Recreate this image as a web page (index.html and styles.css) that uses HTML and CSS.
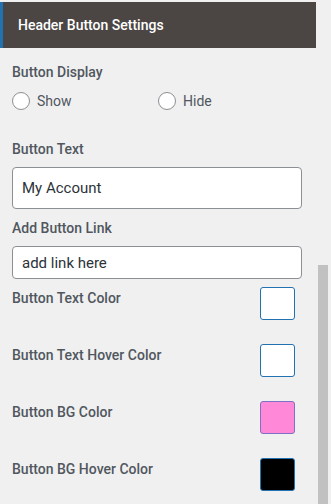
FILE: index.html
```html
<!DOCTYPE html>
<html lang="en">
<head>
  <meta charset="UTF-8" />
  <title>Header Button Settings</title>
  <link rel="stylesheet" href="styles.css">
</head>
<body>
  <div class="panel">
    <div class="panel-main">
      <h3 class="panel-title">Header Button Settings</h3>

      <div class="field field-display">
        <span class="field-label">Button Display</span>
        <div class="radio-row">
          <label class="radio"><span class="radio-dot"></span>Show</label>
          <label class="radio"><span class="radio-dot"></span>Hide</label>
        </div>
      </div>

      <div class="field field-text">
        <label class="field-label" for="btnText">Button Text</label>
        <input type="text" id="btnText" class="input input-lg" value="My Account">
      </div>

      <div class="field field-link">
        <label class="field-label" for="btnLink">Add Button Link</label>
        <input type="text" id="btnLink" class="input input-sm" value="add link here">
      </div>

      <div class="color-list">
        <div class="color-row">
          <span class="field-label">Button Text Color</span>
          <span class="swatch swatch-white"></span>
        </div>
        <div class="color-row">
          <span class="field-label">Button Text Hover Color</span>
          <span class="swatch swatch-white"></span>
        </div>
        <div class="color-row">
          <span class="field-label">Button BG Color</span>
          <span class="swatch swatch-pink"></span>
        </div>
        <div class="color-row">
          <span class="field-label">Button BG Hover Color</span>
          <span class="swatch swatch-black"></span>
        </div>
      </div>
    </div>

    <div class="scrollbar">
      <div class="scroll-thumb"></div>
    </div>
  </div>
</body>
</html>
```

FILE: styles.css
```css
* {
  box-sizing: border-box;
}

body {
  margin: 0;
  font-family: 'Roboto', 'Liberation Sans', sans-serif;
  background: #f0f0f1;
  color: #50575e;
  overflow: hidden;
}

.panel {
  display: flex;
  height: 504px;
}

.panel-main {
  width: 316px;
  padding-top: 2px;
}

.panel-title {
  margin: 0;
  height: 46px;
  background: #4b4644;
  border-left: 3px solid #2271b1;
  color: #fff;
  font-size: 14px;
  font-weight: 500;
  padding-left: 15px;
  display: flex;
  align-items: center;
}

.field {
  padding-left: 12px;
}

.field-label {
  display: block;
  font-size: 14px;
  font-weight: 500;
  color: #50575e;
}

.field-display {
  padding-top: 16px;
}

.radio-row {
  display: flex;
  margin-top: 12px;
}

.radio {
  display: flex;
  align-items: center;
  gap: 7px;
  width: 146px;
  font-size: 14px;
  color: #50575e;
}

.radio-dot {
  width: 18px;
  height: 18px;
  border-radius: 50%;
  border: 1px solid #8c8f94;
  background: #fff;
}

.field-text {
  margin-top: 31px;
}

.field-link {
  margin-top: 11px;
}

.input {
  display: block;
  width: 290px;
  margin-top: 10px;
  border: 1px solid #8c8f94;
  border-radius: 4px;
  background: #fff;
  font-family: inherit;
  font-size: 15px;
  color: #2c3338;
  padding: 0 9px;
}

.input-lg {
  height: 42px;
}

.input-sm {
  height: 33px;
}

.color-list {
  padding: 8px 21px 0 12px;
}

.color-row {
  display: flex;
  justify-content: space-between;
  align-items: flex-start;
  height: 57px;
}

.color-row .field-label {
  margin-top: 3px;
}

.swatch {
  width: 35px;
  height: 33px;
  border-radius: 3px;
  border: 1px solid #2271b1;
}

.swatch-white {
  background: #fff;
}

.swatch-pink {
  background: #ff88d8;
  border-color: #7f6fc5;
}

.swatch-black {
  background: #000;
}

.scrollbar {
  flex: 1;
  display: flex;
  flex-direction: column;
  justify-content: flex-end;
  padding: 0 3px 0 2px;
  background: #f0f0f1;
}

.scroll-thumb {
  height: 239px;
  background: #c1c1c1;
}
```
